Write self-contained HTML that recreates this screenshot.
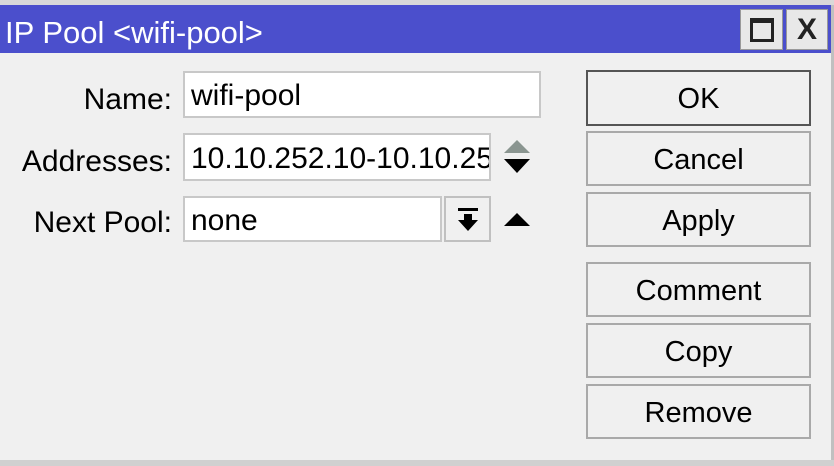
<html><head><style>
body{margin:0;width:834px;height:466px;background:#f0f0f0;font-family:"Liberation Sans",sans-serif;position:relative;overflow:hidden}
.a{position:absolute;box-sizing:border-box}
.t{font-size:30px;color:#000;line-height:1}
.f{background:#fff;border:2px solid #c8c8c8;padding-left:6px;display:flex;align-items:center;font-size:30px;overflow:hidden;white-space:nowrap;padding-top:3px}
.b{border:2px solid #a9a9a9;background:#f0f0f0;display:flex;align-items:center;justify-content:center;font-size:29px;padding-top:3px}
</style></head><body>
<div class="a" style="left:0;top:0;width:834px;height:5px;background:#d9d9d9"></div>
<div class="a" style="left:0;top:5px;width:832px;height:48px;background:#4b4fcc"></div>
<div class="a t" style="left:5px;top:17px;color:#fff;font-size:31px">IP Pool &lt;wifi-pool&gt;</div>
<div class="a" style="left:740px;top:9px;width:43px;height:41px;background:#e8e8e8;border:1px solid #999"></div>
<div class="a" style="left:750px;top:18px;width:24px;height:24px;border:3px solid #222;border-top-width:5px"></div>
<div class="a" style="left:786px;top:9px;width:42px;height:41px;background:#e8e8e8;border:1px solid #999;display:flex;align-items:center;justify-content:center;font-size:30px;font-weight:bold;color:#222">X</div>
<div class="a" style="left:831px;top:5px;width:3px;height:461px;background:#c0c0c0"></div>
<div class="a" style="left:0;top:460px;width:834px;height:6px;background:#d0d0d0"></div>

<div class="a t" style="right:662px;top:85px">Name:</div>
<div class="a t" style="right:662px;top:147px">Addresses:</div>
<div class="a t" style="right:662px;top:208px">Next Pool:</div>
<div class="a f" style="left:183px;top:71px;width:358px;height:47px">wifi-pool</div>
<div class="a f" style="left:183px;top:133px;width:308px;height:48px">10.10.252.10-10.10.252.254</div>
<div class="a f" style="left:183px;top:196px;width:259px;height:46px">none</div>
<div class="a b" style="left:444px;top:196px;width:47px;height:46px;border-color:#c0c0c0;padding-top:0">
<svg width="24" height="26" viewBox="0 0 24 26"><rect x="2" y="2" width="20" height="3"/><path d="M8 8h8v6h6l-10 11-10-11h6z"/></svg></div>
<svg class="a" style="left:502px;top:138px" width="30" height="38"><path d="M2 15L15 2 28 15z" fill="#8a9590"/><path d="M2 21L15 35 28 21z" fill="#000"/></svg>
<svg class="a" style="left:502px;top:209px" width="30" height="20"><path d="M2 17L15 4 28 17z"/></svg>

<div class="a b" style="left:586px;top:70px;width:225px;height:56px;border-color:#555">OK</div>
<div class="a b" style="left:586px;top:131px;width:225px;height:55px">Cancel</div>
<div class="a b" style="left:586px;top:192px;width:225px;height:55px">Apply</div>
<div class="a b" style="left:586px;top:262px;width:225px;height:55px">Comment</div>
<div class="a b" style="left:586px;top:323px;width:225px;height:55px">Copy</div>
<div class="a b" style="left:586px;top:384px;width:225px;height:55px">Remove</div>
</body></html>
